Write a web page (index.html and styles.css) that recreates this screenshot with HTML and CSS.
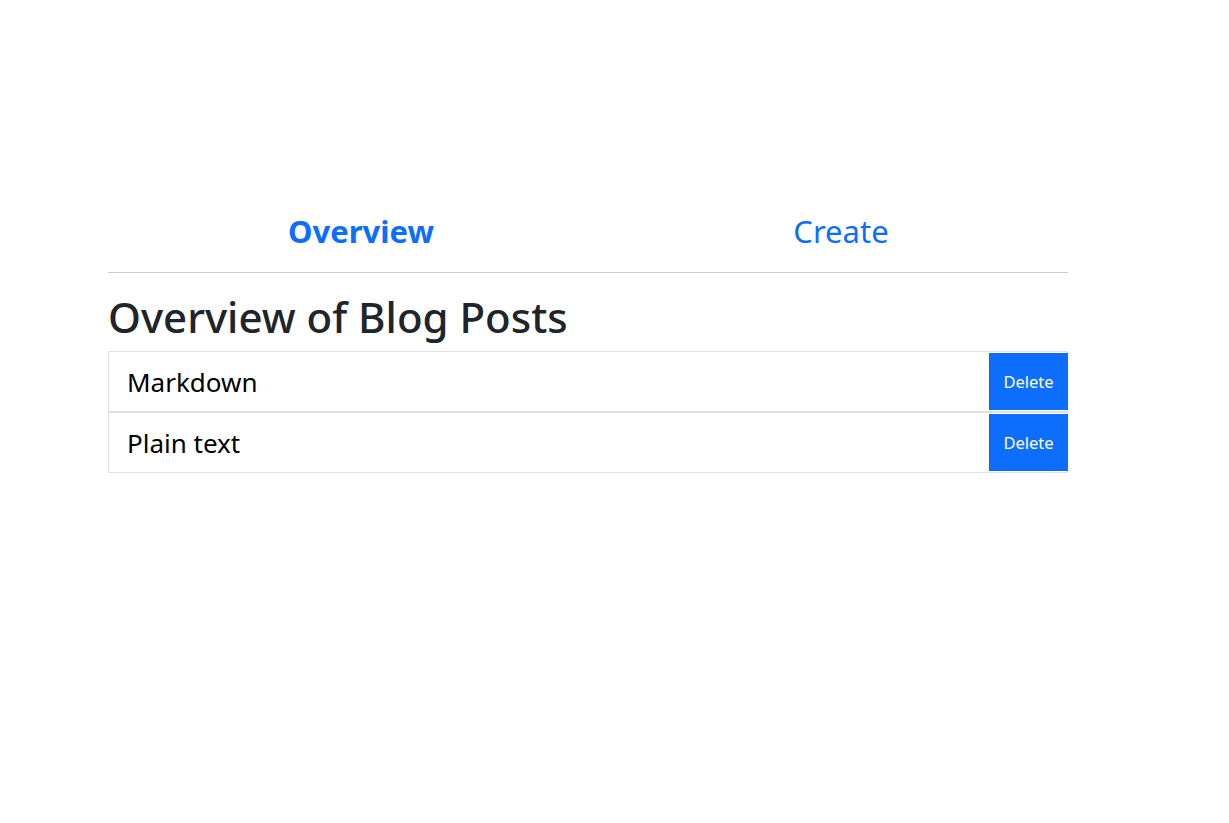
FILE: index.html
```html
<!DOCTYPE html>
<html lang="en">
<head>
<meta charset="utf-8">
<title>Blog Posts</title>
<link rel="stylesheet" href="styles.css">
</head>
<body>
<div class="page">
  <nav class="tabs">
    <a class="tab active" href="#">Overview</a>
    <a class="tab" href="#">Create</a>
  </nav>
  <h1 class="title">Overview of Blog Posts</h1>
  <ul class="posts">
    <li class="post"><span class="post-name">Markdown</span><button class="btn-delete">Delete</button></li>
    <li class="post"><span class="post-name">Plain text</span><button class="btn-delete">Delete</button></li>
  </ul>
</div>
</body>
</html>
```
FILE: styles.css
```css
html, body {
  margin: 0;
  padding: 0;
  background: #fff;
}
body {
  font-family: "Noto Sans", "Open Sans", sans-serif;
  color: #212529;
}
.page {
  width: 960px;
  margin-left: 108px;
  padding-top: 196px;
}
.tabs {
  display: grid;
  grid-template-columns: 480px 480px;
  border-bottom: 1px solid #cccccc;
  padding-left: 13px;
  height: 76px;
  align-items: start;
}
.tab {
  text-align: center;
  text-decoration: none;
  color: #0d6efd;
  font-size: 31px;
  line-height: 70px;
}
.tab.active {
  font-weight: 700;
}
.title {
  margin: 19px 0 9px;
  font-size: 42px;
  font-weight: 500;
  line-height: 1.2;
}
.posts {
  list-style: none;
  margin: 0;
  padding: 0;
}
.post {
  display: flex;
  align-items: center;
  justify-content: space-between;
  height: 59px;
  border: 1px solid #dee2e6;
  padding-left: 18px;
}
.post-name {
  font-size: 26px;
  color: #000;
}
.btn-delete {
  width: 79px;
  height: 57px;
  border: none;
  background: #0d6efd;
  color: #fff;
  font-family: inherit;
  font-size: 16.5px;
  padding: 0;
  margin-right: -1px;
}
```
